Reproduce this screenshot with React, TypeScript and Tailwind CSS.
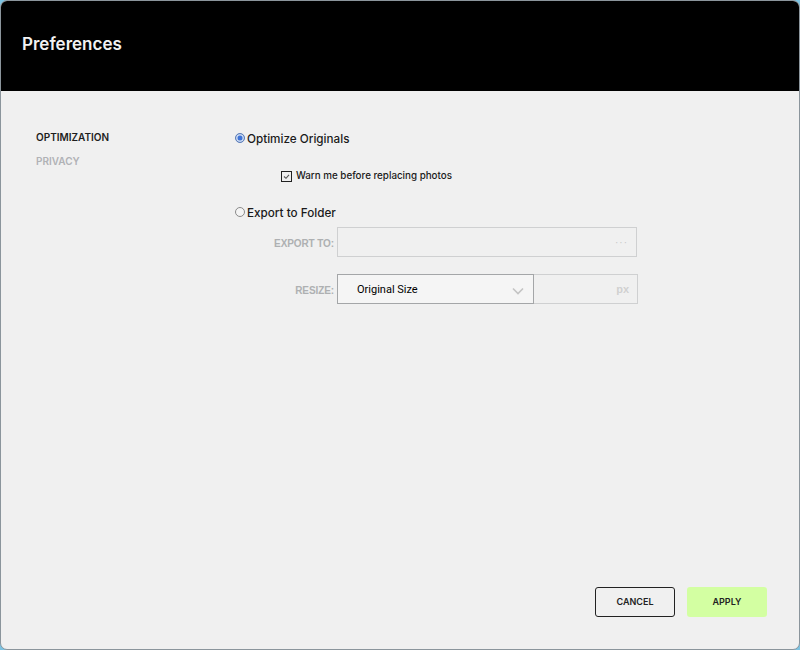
import React from "react";

export default function App() {
  return (
    <div className="w-[800px] h-[650px] bg-[#7cc3e2] overflow-hidden">
      <div className="w-full h-full flex flex-col rounded-[7px] overflow-hidden border border-[#8b959c] bg-[#f0f0f0] font-['Inter',sans-serif]">
        <header className="h-[90px] shrink-0 bg-black flex items-center pl-[21px]">
          <h1 className="text-[17px] leading-none font-semibold text-[#f2f2f2] mb-[3px]">Preferences</h1>
        </header>
        <main className="flex-1 flex pt-[39px]">
          <nav className="w-[234px] shrink-0 pl-[35px] flex flex-col gap-[12px] text-[10px] font-semibold leading-[12px] pt-[1px]">
            <span className="text-[#1d1d1d]">OPTIMIZATION</span>
            <span className="text-[#b0b2b6]">PRIVACY</span>
          </nav>
          <section className="flex-1 flex flex-col">
            <label className="flex items-center h-[16px]">
              <span className="w-[10px] h-[10px] rounded-full border border-[#5f7fb5] bg-[#3f74d8] shadow-[inset_0_0_0_1.5px_#cfdcf2]" />
              <span className="ml-[2px] text-[11.7px] font-medium text-[#1a1a1a] pt-[3px]">Optimize Originals</span>
            </label>
            <label className="flex items-center h-[14px] mt-[23px] ml-[46px]">
              <span className="w-[11px] h-[11px] border border-[#222] bg-[#f0f0f0] flex items-center justify-center">
                <svg width="7" height="7" viewBox="0 0 7 7" fill="none">
                  <path d="M1 3.5 L3 5.3 L6 1.8" stroke="#555" strokeWidth="1.1" />
                </svg>
              </span>
              <span className="ml-[4px] text-[9.8px] font-medium text-[#1a1a1a]">Warn me before replacing photos</span>
            </label>
            <label className="flex items-center h-[16px] mt-[21px]">
              <span className="w-[10px] h-[10px] rounded-full border border-[#8a8a8a] bg-[#f4f4f4]" />
              <span className="ml-[2px] text-[11.7px] font-medium text-[#1a1a1a] pt-[3px]">Export to Folder</span>
            </label>
            <div className="flex items-center mt-[7px] h-[30px]">
              <span className="w-[102px] pr-[3px] text-right text-[10px] tracking-[-0.1px] font-bold font-['Liberation_Sans',sans-serif] text-[#aeb0b2] pt-[2px]">EXPORT TO:</span>
              <div className="w-[300px] h-[30px] border border-[#cfd0d1] flex items-center justify-end pr-[8px]">
                <span className="text-[10px] leading-none tracking-[1px] text-[#c8c8c8] font-['Liberation_Sans',sans-serif] mt-[1px]">···</span>
              </div>
            </div>
            <div className="flex items-center mt-[17px] h-[30px]">
              <span className="w-[102px] pr-[3px] text-right text-[10px] tracking-[-0.1px] font-bold font-['Liberation_Sans',sans-serif] text-[#aeb0b2] pt-[2px]">RESIZE:</span>
              <div className="w-[197px] h-[30px] border border-[#a4a6a8] bg-[#f5f5f5] flex items-center justify-between pl-[19px] pr-[9px]">
                <span className="text-[11px] text-black font-['Roboto',sans-serif] pt-[2px]">Original Size</span>
                <svg width="12" height="8" viewBox="0 0 12 8" fill="none" className="mt-[3px]">
                  <path d="M1 1.5 L6 6.5 L11 1.5" stroke="#c4c4c4" strokeWidth="1.6" />
                </svg>
              </div>
              <div className="w-[104px] h-[30px] border border-l-0 border-[#cfd0d1] flex items-center justify-end pr-[8px]">
                <span className="text-[11px] font-bold font-['Liberation_Sans',sans-serif] text-[#d0d0d0]">px</span>
              </div>
            </div>
          </section>
        </main>
        <footer className="flex justify-end gap-[12px] pr-[32px] pb-[32px]">
          <button className="w-[80px] h-[30px] rounded-[3px] border border-[#222] text-[9px] font-semibold text-[#222]">CANCEL</button>
          <button className="w-[80px] h-[30px] rounded-[3px] bg-[#d3ffa2] text-[9px] font-semibold text-[#222]">APPLY</button>
        </footer>
      </div>
    </div>
  );
}
